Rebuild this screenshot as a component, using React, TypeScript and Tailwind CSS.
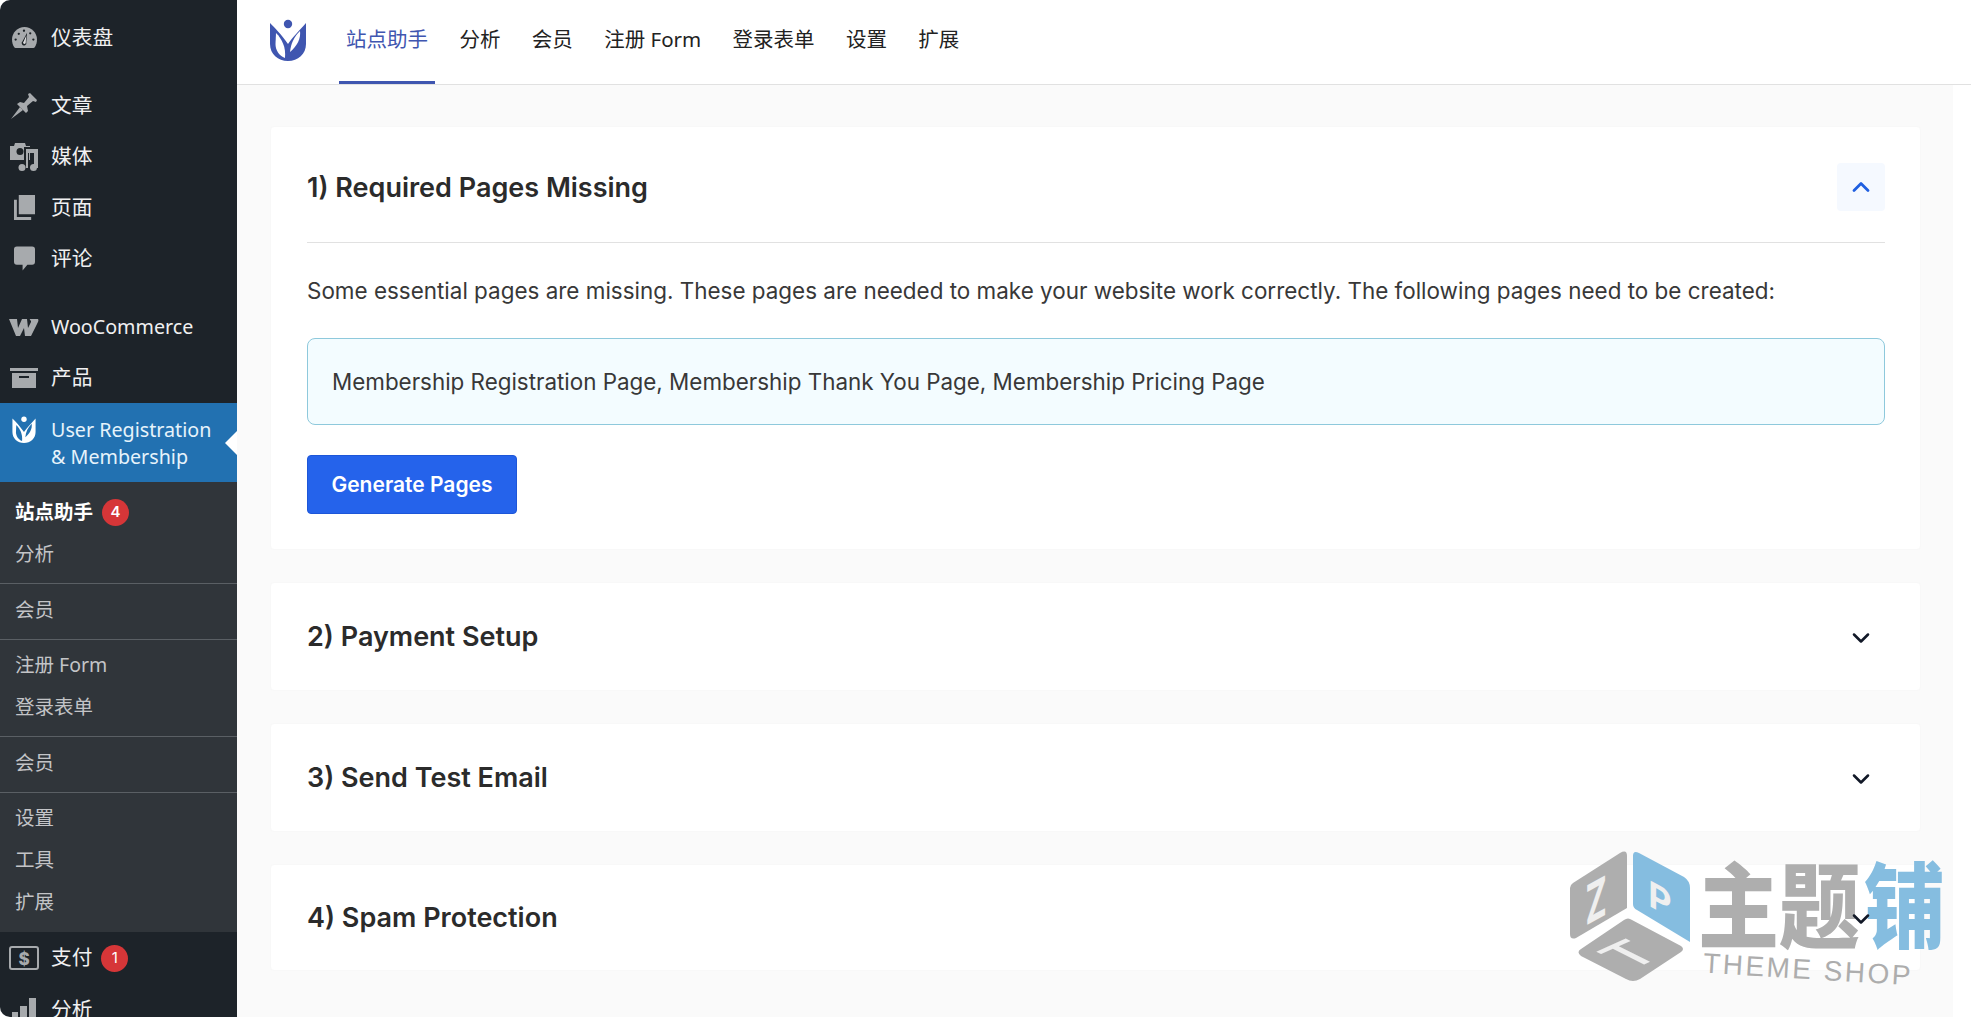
import { ChevronDown, ChevronUp } from 'lucide-react'

const cjk = "font-['Inter','Noto_Sans_CJK_SC',sans-serif]"
const wp = "font-['Noto_Sans','Noto_Sans_CJK_SC',sans-serif]"

function TulipLogo({ className, dot, cut }: { className: string; dot: string; cut: string }) {
  return (
    <svg viewBox="0 0 36 42" className={className}>
      <circle cx="18" cy="5" r="4.2" fill={dot} />
      <path
        d="M0 4 C5 9 11 15 18 25 C22 19 29 12 36 4 L36 25 C36 35 28 42 18 42 C8 42 0 35 0 25 Z"
        fill={dot}
      />
      <path d="M6 14 C12 20 16 28 15 39 C9 37 5.500 31 5.500 25 Z" fill={cut} />
      <path d="M30 12 C31 20 27 27 20 33 C21 24 24 18 30 12 Z" fill={cut} />
    </svg>
  )
}

const dash = (
  <svg viewBox="0 0 24 20" className="h-[21px] w-[25px]" fill="#a7aaad">
    <path d="M12 0C5.400 0 0 5.400 0 12c0 2.600.7 5 2 7 .5.7 1 1 2 1h16c1 0 1.500-.3 2-1 1.300-2 2-4.400 2-7C24 5.400 18.600 0 12 0z" />
    <path d="M14.500 5.500l-.8 9a2.300 2.300 0 1 1-3.600-1z" fill="#1d2327" />
    <path d="M13.700 8l-.5 6.500a1.300 1.300 0 1 1-2-.7z" fill="#dcdcde" />
    <circle cx="3.500" cy="12" r="1.100" fill="#1d2327" />
    <circle cx="6.500" cy="6.500" r="1.100" fill="#1d2327" />
    <circle cx="11.500" cy="3.500" r="1.100" fill="#1d2327" />
    <circle cx="17.500" cy="6" r="1.100" fill="#1d2327" />
    <circle cx="20.500" cy="12" r="1.100" fill="#1d2327" />
  </svg>
)

const pin = (
  <svg viewBox="0 0 26 26" className="h-[26px] w-[26px]" fill="#a7aaad">
    <path d="M0 26 L9 14 L12 17 Z" />
    <path d="M6 11 L9 9 L13 10 L18 4 L17 1 L19 0 L26 7 L25 9 L22 8 L16 13 L17 18 L15 20 Z" />
  </svg>
)

const media = (
  <svg viewBox="0 0 28 28" className="h-[28px] w-[28px]" fill="#a7aaad">
    <path d="M0 3h4l1-3h10l1 3h4v14H0z" />
    <circle cx="10" cy="8.500" r="3.500" fill="#1d2327" />
    <path d="M14 4h14v21h-3V9h-6v16h-5z" fill="#1d2327" />
    <path d="M16 6h12v19h-4V10h-6v15h-2z" />
    <circle cx="12" cy="24.500" r="3.500" />
    <circle cx="23.500" cy="24.500" r="3.500" />
  </svg>
)

const page = (
  <svg viewBox="0 0 22 26" className="h-[25px] w-[21px]" fill="#a7aaad">
    <path d="M5 0h17v20H5z" />
    <path d="M0 5h3v18h15v3H0z" />
  </svg>
)

const comment = (
  <svg viewBox="0 0 22 25" className="h-[25px] w-[21px]" fill="#a7aaad">
    <path d="M3 0h16a3 3 0 0 1 3 3v13a3 3 0 0 1-3 3h-5l-5 6v-6H3a3 3 0 0 1-3-3V3a3 3 0 0 1 3-3z" />
  </svg>
)

const woo = (
  <svg viewBox="0 0 30 18" className="h-[18px] w-[30px]" fill="#a7aaad">
    <path d="M0 1h8l1 9 4-9h5l1 9 3-6c.5-2-2-2-1-3h8c1 1 0 3-1 5l-6 12h-6l-1-8-4 8H7z" />
  </svg>
)

const archive = (
  <svg viewBox="0 0 28 20" className="h-[20px] w-[28px]" fill="#a7aaad">
    <rect x="0" y="0" width="28" height="3" />
    <path d="M2 5h24v15H2zM9 8v2h10V8z" fillRule="evenodd" />
  </svg>
)

const money = (
  <svg viewBox="0 0 30 24" className="h-[24px] w-[30px]">
    <rect x="1" y="1" width="28" height="22" rx="2" fill="none" stroke="#a7aaad" strokeWidth="2" />
    <text x="15" y="18.500" textAnchor="middle" fontSize="17" fontWeight="800" fontFamily="Inter" fill="#a7aaad">$</text>
  </svg>
)

const bars = (
  <svg viewBox="0 0 24 24" className="h-[24px] w-[24px]" fill="#a7aaad">
    <rect x="0" y="14" width="6" height="10" />
    <rect x="8" y="8" width="7" height="16" />
    <rect x="17" y="0" width="7" height="24" />
  </svg>
)

function MainItem({ icon, label, className = 'text-[20.7px]' }: { icon: React.ReactNode; label: string; className?: string }) {
  return (
    <div className={`flex items-center h-[51px] text-[#f0f0f1] ${className}`}>
      <span className="flex w-[51px] shrink-0 items-center justify-center pr-[3px]">{icon}</span>
      {label}
    </div>
  )
}

function SubItem({ label, active, badge }: { label: string; active?: boolean; badge?: string }) {
  return (
    <div className={`flex items-center h-[42px] pl-[15px] text-[19.5px] ${active ? 'font-bold text-white' : 'text-[#c3c4c7]'}`}>
      {label}
      {badge && (
        <span className="ml-[9px] flex h-[27px] w-[27px] items-center justify-center rounded-full bg-[#d63638] font-['Inter'] text-[15px] font-semibold text-white">
          {badge}
        </span>
      )}
    </div>
  )
}

function Sep() {
  return <div className="mb-[4.5px] mt-[8px] h-px bg-[#5a5f64]" />
}

function Sidebar() {
  return (
    <aside className={`relative h-[1017px] w-[237px] shrink-0 overflow-hidden rounded-bl-[10px] rounded-tl-[10px] bg-[#1d2329] ${wp}`}>
      <div className="pt-[12px]">
        <MainItem icon={dash} label="仪表盘" />
      </div>
      <div className="pt-[17px]">
        <MainItem icon={pin} label="文章" />
        <MainItem icon={media} label="媒体" />
        <MainItem icon={page} label="页面" />
        <MainItem icon={comment} label="评论" />
      </div>
      <div className="pt-[17px]">
        <MainItem icon={woo} label="WooCommerce" className="text-[19.7px]" />
        <MainItem icon={archive} label="产品" />
      </div>
      <div className="relative flex h-[79px] bg-[#2271b1] pt-[13px] text-[19.7px] leading-[27px] text-[#e6f3fb]">
        <span className="flex w-[51px] shrink-0 justify-center pr-[3px]">
          <TulipLogo className="h-[27px] w-[24px]" dot="#ffffff" cut="#2271b1" />
        </span>
        <span>
          User Registration
          <br />& Membership
        </span>
        <span className="absolute right-0 top-[28px] h-0 w-0 border-y-[12px] border-r-[12px] border-y-transparent border-r-white" />
      </div>
      <div className="bg-[#30353a] pb-[9px] pt-[9px]">
        <SubItem label="站点助手" active badge="4" />
        <SubItem label="分析" />
        <Sep />
        <SubItem label="会员" />
        <Sep />
        <SubItem label="注册 Form" />
        <SubItem label="登录表单" />
        <Sep />
        <SubItem label="会员" />
        <Sep />
        <SubItem label="设置" />
        <SubItem label="工具" />
        <SubItem label="扩展" />
      </div>
      <div className="flex h-[52px] items-center text-[20.7px] text-[#f0f0f1]">
        <span className="flex w-[51px] shrink-0 items-center justify-center pr-[3px]">{money}</span>
        支付
        <span className="ml-[9px] flex h-[27px] w-[27px] items-center justify-center rounded-full bg-[#d63638] font-['Inter'] text-[15px] text-white">
          1
        </span>
      </div>
      <MainItem icon={bars} label="分析" />
    </aside>
  )
}

const tabs = ['站点助手', '分析', '会员', '注册 Form', '登录表单', '设置', '扩展']

function TopNav() {
  return (
    <header className={`flex h-[85px] border-b border-[#e1e1e1] bg-white pl-[33px] ${wp}`}>
      <div className="flex h-full items-center pb-[4px]">
        <TulipLogo className="h-[42px] w-[36px]" dot="#3f56b0" cut="#ffffff" />
      </div>
      <nav className="ml-[33px] flex gap-[17.4px]">
        {tabs.map((t, i) => (
          <div
            key={t}
            className={`flex h-[84px] items-center border-b-[3px] px-[7px] pb-[3px] text-[20.5px] ${
              i === 0 ? 'border-[#3f56b0] text-[#3f56b0]' : 'border-transparent text-[#222222]'
            }`}
          >
            {t}
          </div>
        ))}
      </nav>
    </header>
  )
}

function Collapsed({ title, height }: { title: string; height: string }) {
  return (
    <section className={`mb-[32px] flex items-center justify-between rounded-[4px] border border-[#f8f8f8] bg-white pl-[36px] pr-[45px] pt-[2px] ${height}`}>
      <h2 className="text-[27px] font-semibold text-[#2b2b2b]">{title}</h2>
      <ChevronDown className="relative z-10 h-[28px] w-[28px] text-[#111827]" strokeWidth={2.2} />
    </section>
  )
}

function Watermark() {
  return (
    <div className="absolute left-[1570px] top-[850px] h-[140px] w-[380px]">
      <svg viewBox="0 0 122 132" className="absolute left-0 top-0 h-[132px] w-[122px]">
        <path d="M3 33 L50 3 Q57 -1 57 6 L57 58 L6 88 Q0 90 0 84 L0 38 Q0 35 3 33 Z" fill="#aeaeae" />
        <path d="M69 3 L114 27 Q120 31 120 38 L120 92 L67 60 Q63 58 63 54 L63 6 Q63 0 69 3 Z" fill="#85bde0" />
        <path d="M54 70 Q58 67 62 70 L111 96 Q115 99 111 102 L70 129 Q63 133 56 129 L11 106 Q6 102 11 99 Z" fill="#aeaeae" />
        <text transform="matrix(1 -0.55 0 1.7 26 70)" textAnchor="middle" fontSize="32" fontWeight="700" fontFamily="Inter" fill="#efefef">Z</text>
        <text transform="matrix(1 0.55 0 1 90 62)" textAnchor="middle" fontSize="36" fontWeight="700" fontFamily="Inter" fill="#efefef">P</text>
        <text transform="matrix(2 -0.9 1.9 0.95 77 113)" textAnchor="middle" fontSize="26" fontWeight="500" fontFamily="Inter" fill="#efefef">T</text>
      </svg>
      <div className={`absolute left-[128px] top-0 flex origin-top scale-y-[1.15] text-[81px] font-black leading-[100px] ${cjk}`}>
        <span className="text-[#aeaeae]">主题</span>
        <span className="ml-[4px] text-[#85bde0]">铺</span>
      </div>
      <div className="absolute left-[133px] top-[103px] rotate-[3.5deg] font-['Liberation_Sans',sans-serif] text-[28px] leading-[34px] tracking-[2.5px] text-[#adadad]">
        THEME SHOP
      </div>
    </div>
  )
}

export default function App() {
  return (
    <div className="relative flex h-[1017px] w-[1971px] overflow-hidden bg-white">
      <Sidebar />
      <main className={`flex min-w-0 flex-1 flex-col ${cjk}`}>
        <TopNav />
        <div className="flex flex-1 overflow-hidden">
          <div className="w-[1716px] shrink-0 bg-[#fafafa] pl-[33px] pr-[32px] pt-[41px]">
            <section className="mb-[32px] h-[424px] rounded-[4px] border border-[#f8f8f8] bg-white pl-[36px] pr-[35px]">
              <div className="flex h-[116px] items-center justify-between border-b border-[#e1e1e1] pt-[5px]">
                <h2 className="pt-[2px] text-[27px] font-semibold text-[#2b2b2b]">1) Required Pages Missing</h2>
                <button className="flex h-[48px] w-[48px] items-center justify-center rounded-[4px] bg-[#f5f9ff] text-[#1f5fe0]">
                  <ChevronUp className="h-[28px] w-[28px]" strokeWidth={2.4} />
                </button>
              </div>
              <p className="mt-[30px] text-[22.45px] leading-[36px] text-[#383838]">
                Some essential pages are missing. These pages are needed to make your website work correctly. The following pages need to be created:
              </p>
              <div className="mt-[29px] flex h-[87px] items-center rounded-[8px] border border-[#8ec9dc] bg-[#f3fcff] pl-[24px] text-[22.4px] text-[#383838]">
                Membership Registration Page, Membership Thank You Page, Membership Pricing Page
              </div>
              <button className="mt-[30px] h-[59px] w-[210px] rounded-[4px] border border-[#1d56d8] bg-[#2563eb] text-[21px] font-semibold text-white">
                Generate Pages
              </button>
            </section>
            <Collapsed title="2) Payment Setup" height="h-[109px]" />
            <Collapsed title="3) Send Test Email" height="h-[109px]" />
            <Collapsed title="4) Spam Protection" height="h-[107px]" />
          </div>
        </div>
      </main>
      <Watermark />
    </div>
  )
}
